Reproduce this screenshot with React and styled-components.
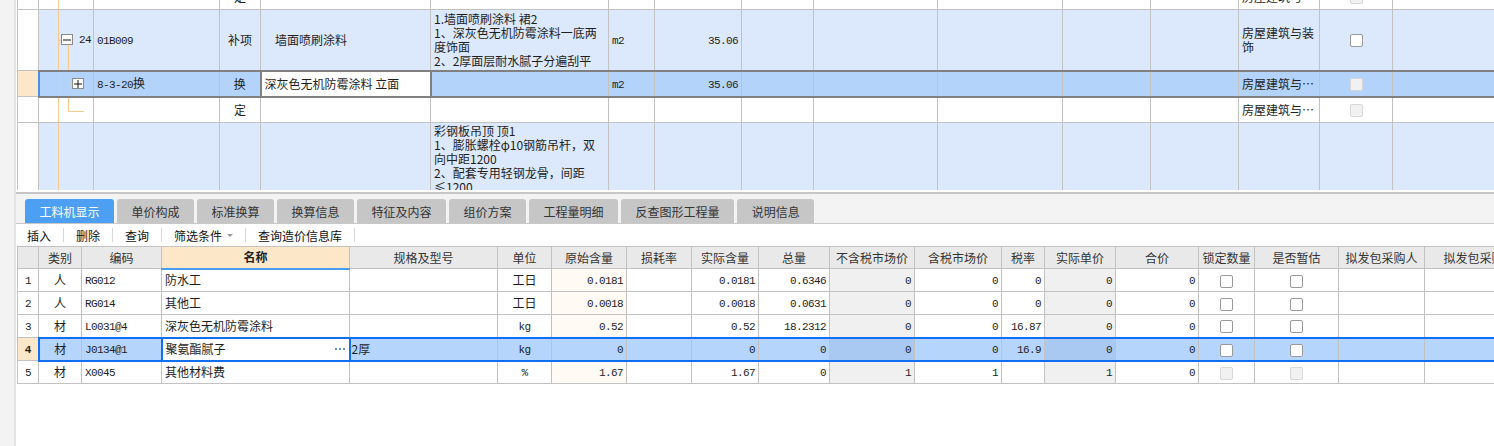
import React from 'react';
import styled, { createGlobalStyle, css } from 'styled-components';

const GlobalStyle = createGlobalStyle`
  html, body { margin: 0; padding: 0; background: #fff; }
  body {
    font-family: "Noto Sans CJK SC", "Noto Sans", sans-serif;
    font-size: 12px;
    color: #1e1e1e;
  }
  * { box-sizing: border-box; }
`;

const Page = styled.div`
  display: flex;
  width: 1494px;
  height: 446px;
  overflow: hidden;
  background: #fff;
`;

const SideStrip = styled.div`
  flex: none;
  width: 16px;
  background: #f3f3f3;
  border-right: 2px solid #e3e3e3;
`;

const Main = styled.div`
  flex: 1;
  min-width: 0;
  display: flex;
  flex-direction: column;
  overflow: hidden;
`;

const TopViewport = styled.div`
  flex: none;
  height: 190px;
  overflow: hidden;
  padding-left: 1px;
`;

const Splitter = styled.div`
  flex: none;
  height: 4px;
  border-top: 2px solid #fff;
  background: #c6c6c6;
`;

const TabBar = styled.div`
  flex: none;
  height: 30px;
  display: flex;
  align-items: flex-end;
  gap: 3px;
  padding-left: 9px;
  background: #f3f3f3;
  border-bottom: 1px solid #c8c8c8;
`;

const Tab = styled.div`
  height: 24px;
  padding: 0 14.5px;
  display: flex;
  align-items: center;
  border-radius: 3px 3px 0 0;
  background: ${p => (p.$active ? '#4c9ff3' : '#c6c6c6')};
  color: ${p => (p.$active ? '#fff' : '#333')};
  white-space: nowrap;
`;

const Toolbar = styled.div`
  flex: none;
  height: 22px;
  display: flex;
  align-items: center;
  padding-left: 11px;
  background: #fff;
`;

const ToolItem = styled.div`
  display: flex;
  align-items: center;
  gap: 3px;
  padding: 0 12px;
  color: #111;
  &:first-child { padding-left: 0; }
`;

const ToolSep = styled.div`
  width: 1px;
  height: 14px;
  background: #d8d8d8;
`;

const Caret = styled.span`
  width: 0;
  height: 0;
  margin-left: 2px;
  border-left: 3px solid transparent;
  border-right: 3px solid transparent;
  border-top: 3px solid #999;
`;

const BottomViewport = styled.div`
  flex: 1;
  overflow: hidden;
  padding-left: 1px;
`;

const Grid = styled.table`
  table-layout: fixed;
  border-collapse: collapse;
  width: ${p => p.$w}px;
  margin-top: ${p => p.$offset || 0}px;
`;

const Col = styled.col`
  width: ${p => p.$w}px;
`;

const Cell = styled.td`
  position: relative;
  border: 1px solid #c2c2c2;
  padding: 0 ${p => (p.$pad != null ? p.$pad : 3)}px;
  line-height: 14px;
  text-align: ${p => p.$align || 'left'};
  vertical-align: ${p => (p.$top ? 'top' : 'middle')};
  ${p => p.$top && css`padding-top: 1px;`}
  white-space: ${p => (p.$wrap ? 'pre-line' : p.$normal ? 'normal' : 'nowrap')};
  overflow: hidden;
  text-overflow: ${p => (p.$clip ? 'clip' : 'ellipsis')};
  background: ${p => p.$bg || 'transparent'};
  ${p => p.$bold && css`font-weight: bold;`}
`;

const rowTone = {
  white: '#ffffff',
  blue: '#dce8fb',
  sel: '#b3d3fb',
};

const TopRow = styled.tr`
  height: ${p => p.$h}px;
  background: ${p => rowTone[p.$tone]};
  ${p => p.$tone === 'sel' && css`
    & > td:not(:first-child) {
      border-top: 2px solid #808080;
      border-bottom: 2px solid #808080;
    }
    & > td:nth-child(2) { border-left: 2px solid #4a90e2; }
  `}
`;

const EditCell = styled(Cell)`
  background: #fff;
  border-left: 2px solid #808080;
  border-right: 2px solid #808080;
`;

const Mono = styled.span`
  font-family: "Liberation Mono", "Noto Sans CJK SC", monospace;
  font-size: 11px;
  letter-spacing: -0.6px;
`;

const Check = styled.span`
  display: inline-block;
  vertical-align: middle;
  width: 13px;
  height: 13px;
  border-radius: 2px;
  border: 1px solid ${p => (p.$disabled ? '#d8d8d8' : '#9a9a9a')};
  background: ${p => (p.$disabled ? '#f1f1f1' : '#fff')};
`;

const TreeWrap = styled.div`
  display: flex;
  align-items: center;
  gap: 6px;
  padding-left: ${p => p.$indent}px;
`;

const Expander = styled.span`
  position: relative;
  z-index: 1;
  flex: none;
  width: 12px;
  height: 11px;
  border: 1px solid #8a8a8a;
  background: #fff;
  display: flex;
  align-items: center;
  justify-content: center;
`;

const TreeSvg = styled.svg`
  position: absolute;
  left: 0;
  top: 0;
  width: 100%;
  height: 100%;
  overflow: visible;
  pointer-events: none;
`;

const TREE = '#f6c98f';

function TreeLines({ kind }) {
  return (
    <TreeSvg>
      <line x1="19.5" y1="0" x2="19.5" y2="100%" stroke={TREE} />
      {kind === 'parent' && (
        <svg x="0" y="50%" overflow="visible">
          <line x1="19.5" y1="0.5" x2="23" y2="0.5" stroke={TREE} />
          <line x1="29.5" y1="0" x2="29.5" y2="60" stroke={TREE} />
        </svg>
      )}
      {kind === 'child' && (
        <>
          <line x1="29.5" y1="0" x2="29.5" y2="100%" stroke={TREE} />
          <svg x="0" y="50%" overflow="visible">
            <line x1="29.5" y1="0.5" x2="33" y2="0.5" stroke={TREE} />
          </svg>
        </>
      )}
      {kind === 'last' && (
        <>
          <line x1="29.5" y1="0" x2="29.5" y2="13.5" stroke={TREE} />
          <line x1="29.5" y1="13.5" x2="45" y2="13.5" stroke={TREE} />
        </>
      )}
    </TreeSvg>
  );
}

function ExpSign({ plus }) {
  return (
    <svg width="8" height="8" viewBox="0 0 8 8">
      <line x1="0" y1="4" x2="8" y2="4" stroke="#111" strokeWidth="1" />
      {plus && <line x1="4" y1="0" x2="4" y2="8" stroke="#111" strokeWidth="1" />}
    </svg>
  );
}

function MoreDots() {
  return (
    <svg width="10" height="2" viewBox="0 0 10 2">
      <rect x="0" y="0" width="2" height="2" fill="#5b93d6" />
      <rect x="4" y="0" width="2" height="2" fill="#5b93d6" />
      <rect x="8" y="0" width="2" height="2" fill="#5b93d6" />
    </svg>
  );
}

const topCols = [21, 55, 126, 41, 170, 178, 46, 87, 72, 124, 125, 88, 88, 81, 73, 110];

const DESC1 = '1.墙面喷刷涂料 裙2\n1、深灰色无机防霉涂料一底两\n度饰面\n2、2厚面层耐水腻子分遍刮平';
const DESC4 = '彩钢板吊顶 顶1\n1、膨胀螺栓φ10钢筋吊杆，双\n向中距1200\n2、配套专用轻钢龙骨，间距\n≤1200\n3、0.5厚彩钢板面层';

function Blank({ n }) {
  return Array.from({ length: n }).map((_, i) => <Cell key={i} />);
}

function TopGrid() {
  return (
    <Grid $w={topCols.reduce((a, b) => a + b, 0)} $offset={-17}>
      <colgroup>
        {topCols.map((w, i) => <Col key={i} $w={w} />)}
      </colgroup>
      <tbody>
        <TopRow $h={26} $tone="white">
          <Cell $bg="#fff" />
          <Cell><TreeLines kind="pass" /></Cell>
          <Cell />
          <Cell $align="center">定</Cell>
          <Blank n={9} />
          <Cell>房屋建筑与装饰</Cell>
          <Cell $align="center"><Check $disabled /></Cell>
          <Cell />
        </TopRow>
        <TopRow $h={61} $tone="blue">
          <Cell $bg="#fff" />
          <Cell $pad={0}>
            <TreeLines kind="parent" />
            <TreeWrap $indent={22}>
              <Expander><ExpSign /></Expander>
              <Mono>24</Mono>
            </TreeWrap>
          </Cell>
          <Cell><Mono>01B009</Mono></Cell>
          <Cell $align="center">补项</Cell>
          <Cell $pad={14}>墙面喷刷涂料</Cell>
          <Cell $wrap>{DESC1}</Cell>
          <Cell><Mono>m2</Mono></Cell>
          <Cell $align="right"><Mono>35.06</Mono></Cell>
          <Blank n={5} />
          <Cell $normal>房屋建筑与装饰</Cell>
          <Cell $align="center"><Check /></Cell>
          <Cell />
        </TopRow>
        <TopRow $h={26} $tone="sel">
          <Cell $bg="#fde7cb" />
          <Cell $pad={0}>
            <TreeLines kind="child" />
            <TreeWrap $indent={32}>
              <Expander><ExpSign plus /></Expander>
            </TreeWrap>
          </Cell>
          <Cell><Mono>8-3-20</Mono>换</Cell>
          <Cell $align="center">换</Cell>
          <EditCell>深灰色无机防霉涂料 立面</EditCell>
          <Cell />
          <Cell><Mono>m2</Mono></Cell>
          <Cell $align="right"><Mono>35.06</Mono></Cell>
          <Blank n={5} />
          <Cell>房屋建筑与装饰</Cell>
          <Cell $align="center"><Check $disabled /></Cell>
          <Cell />
        </TopRow>
        <TopRow $h={26} $tone="white">
          <Cell $bg="#fff" />
          <Cell $pad={0}><TreeLines kind="last" /></Cell>
          <Cell />
          <Cell $align="center">定</Cell>
          <Blank n={9} />
          <Cell>房屋建筑与装饰</Cell>
          <Cell $align="center"><Check $disabled /></Cell>
          <Cell />
        </TopRow>
        <TopRow $h={96} $tone="blue">
          <Cell $bg="#fff" />
          <Cell $pad={0}><TreeLines kind="pass" /></Cell>
          <Cell />
          <Cell />
          <Cell />
          <Cell $wrap $top>{DESC4}</Cell>
          <Blank n={10} />
        </TopRow>
      </tbody>
    </Grid>
  );
}

const tabs = ['工料机显示', '单价构成', '标准换算', '换算信息', '特征及内容', '组价方案', '工程量明细', '反查图形工程量', '说明信息'];
const tools = ['插入', '删除', '查询', '筛选条件', '查询造价信息库'];

const botCols = [21, 43, 80, 188, 148, 54, 75, 65, 67, 71, 85, 87, 43, 71, 83, 56, 84, 86, 110];
const headers = ['', '类别', '编码', '名称', '规格及型号', '单位', '原始含量', '损耗率', '实际含量', '总量', '不含税市场价', '含税市场价', '税率', '实际单价', '合价', '锁定数量', '是否暂估', '拟发包采购人', '拟发包采购人'];

const HeadRow = styled.tr`
  height: 22px;
  background: #e9e9e9;
`;

const HeadCell = styled(Cell)`
  text-align: center;
  color: #333;
  ${p => p.$focus && css`
    background: #fde7c9;
    font-weight: bold;
    color: #222;
    border-bottom: 2px solid #4a9df0;
  `}
`;

const BRow = styled.tr`
  height: 23px;
  background: ${p => (p.$sel ? '#b5d5fd' : '#fff')};
  ${p => p.$sel && css`
    & > td:not(:first-child) {
      border-top: 2px solid #0f6ff0;
      border-bottom: 2px solid #0f6ff0;
    }
    & > td:nth-child(2) { border-left: 2px solid #0f6ff0; }
  `}
`;

const NameEdit = styled(Cell)`
  background: #fff;
  border: 2px solid #0f6ff0;
  padding-right: 4px;
`;

const EditInner = styled.div`
  display: flex;
  align-items: center;
  justify-content: space-between;
`;

const rows = [
  { n: '1', t: '人', code: 'RG012', name: '防水工', spec: '', unit: '工日', v: ['0.0181', '', '0.0181', '0.6346', '0', '0', '0', '0', '0'], cb: 'on' },
  { n: '2', t: '人', code: 'RG014', name: '其他工', spec: '', unit: '工日', v: ['0.0018', '', '0.0018', '0.0631', '0', '0', '0', '0', '0'], cb: 'on' },
  { n: '3', t: '材', code: 'L0031@4', name: '深灰色无机防霉涂料', spec: '', unit: 'kg', v: ['0.52', '', '0.52', '18.2312', '0', '0', '16.87', '0', '0'], cb: 'on' },
  { n: '4', t: '材', code: 'J0134@1', name: '聚氨酯腻子', spec: '2厚', unit: 'kg', v: ['0', '', '0', '0', '0', '0', '16.9', '0', '0'], cb: 'on', sel: true },
  { n: '5', t: '材', code: 'X0045', name: '其他材料费', spec: '', unit: '%', v: ['1.67', '', '1.67', '0', '1', '1', '', '1', '0'], cb: 'off' },
];

function numBg(i, sel) {
  if (i === 0) return sel ? undefined : '#fffaf4';
  if (i === 4 || i === 7) return sel ? '#a9c9f3' : '#f0f0f0';
  return undefined;
}

function BottomGrid() {
  return (
    <Grid $w={botCols.reduce((a, b) => a + b, 0)}>
      <colgroup>
        {botCols.map((w, i) => <Col key={i} $w={w} />)}
      </colgroup>
      <tbody>
        <HeadRow>
          {headers.map((h, i) => (
            <HeadCell key={i} $focus={i === 3} $clip>{h}</HeadCell>
          ))}
        </HeadRow>
        {rows.map(r => (
          <BRow key={r.n} $sel={r.sel}>
            <Cell $align="center" $bg={r.sel ? '#fde7cb' : '#fff'} $bold={r.sel}>
              <Mono>{r.n}</Mono>
            </Cell>
            <Cell $align="center">{r.t}</Cell>
            <Cell><Mono>{r.code}</Mono></Cell>
            {r.sel ? (
              <NameEdit>
                <EditInner>
                  <span>{r.name}</span>
                  <MoreDots />
                </EditInner>
              </NameEdit>
            ) : (
              <Cell>{r.name}</Cell>
            )}
            <Cell $pad={1}>{r.spec}</Cell>
            <Cell $align="center">
              {/^[a-z%]+$/.test(r.unit) ? <Mono>{r.unit}</Mono> : r.unit}
            </Cell>
            {r.v.map((x, i) => (
              <Cell key={i} $align="right" $bg={numBg(i, r.sel)}>
                <Mono>{x}</Mono>
              </Cell>
            ))}
            <Cell $align="center"><Check $disabled={r.cb === 'off'} /></Cell>
            <Cell $align="center"><Check $disabled={r.cb === 'off'} /></Cell>
            <Cell />
            <Cell />
          </BRow>
        ))}
      </tbody>
    </Grid>
  );
}

export default function App() {
  return (
    <>
      <GlobalStyle />
      <Page>
        <SideStrip />
        <Main>
          <TopViewport>
            <TopGrid />
          </TopViewport>
          <Splitter />
          <TabBar>
            {tabs.map((t, i) => (
              <Tab key={t} $active={i === 0}>{t}</Tab>
            ))}
          </TabBar>
          <Toolbar>
            {tools.map((t, i) => (
              <React.Fragment key={t}>
                <ToolItem>
                  {t}
                  {t === '筛选条件' && <Caret />}
                </ToolItem>
                <ToolSep />
              </React.Fragment>
            ))}
          </Toolbar>
          <BottomViewport>
            <BottomGrid />
          </BottomViewport>
        </Main>
      </Page>
    </>
  );
}
